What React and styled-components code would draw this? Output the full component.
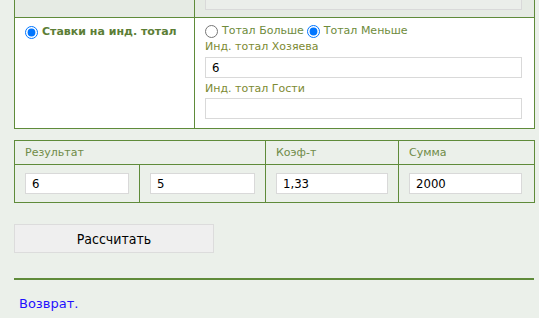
import React from 'react'
import styled, { createGlobalStyle } from 'styled-components'

const GlobalStyle = createGlobalStyle`
  html, body {
    margin: 0;
    background: #ebf0ea;
  }
  body {
    font-family: "DejaVu Sans", Verdana, sans-serif;
    font-size: 11px;
  }
`

const Page = styled.div`
  margin-top: -20px;
  padding: 0 4px 0 14px;
`

const Table = styled.table`
  width: 521px;
  border-collapse: collapse;
  table-layout: fixed;
  margin-bottom: ${(p) => p.$gap || 0}px;

  td, th {
    border: 1px solid #5f8b3a;
    vertical-align: top;
    text-align: left;
  }
`

const GreyRow = styled.tr`
  background: #e6ebe4;
  td {
    padding: 8px 12px 7px 10px;
  }
`

const WhiteRow = styled.tr`
  background: #fff;
`

const Cell = styled.td`
  padding: ${(p) => p.$pad || '6px 12px 9px 10px'};
  line-height: 14px;
`

const HeadCell = styled.th`
  box-sizing: border-box;
  padding: 5px 10px 4px 10px;
  font-weight: normal;
  color: #6f8b48;
  font-size: 11px;
  height: 24px;
  line-height: 14px;
`

const OptionRow = styled.div`
  display: flex;
  align-items: center;
  height: 14px;
  gap: 3px;
`

const Option = styled.label`
  display: inline-flex;
  align-items: center;
  gap: 4px;
  height: 14px;
  color: ${(p) => (p.$bold ? '#5c7e36' : '#6e8b3c')};
  font-weight: ${(p) => (p.$bold ? 'bold' : 'normal')};

  input {
    margin: 0;
    width: 13px;
    height: 13px;
  }
`

const Field = styled.div`
  color: #7d8a32;
  height: 14px;
  line-height: 14px;
  margin: ${(p) => (p.$first ? '2px 0 3px' : '4px 0 2px')};
`

const TextBox = styled.input`
  box-sizing: border-box;
  display: block;
  width: 100%;
  height: 21px;
  margin: 0;
  border: 1px solid #d9d9d9;
  background: ${(p) => (p.$muted ? '#ebeeea' : '#fff')};
  padding: 0 6px;
  font-family: "DejaVu Sans Condensed", "DejaVu Sans", sans-serif;
  font-stretch: condensed;
  font-size: 13px;
  color: #000;
  outline: none;
`

const Button = styled.button`
  display: block;
  width: 200px;
  height: 29px;
  background: #efefef;
  border: 1px solid #dcdcdc;
  font-family: "DejaVu Sans Condensed", "DejaVu Sans", sans-serif;
  font-stretch: condensed;
  font-size: 14px;
  color: #000;
  padding: 0;
`

const Rule = styled.div`
  width: 520px;
  height: 2px;
  background: #5f8b3a;
  margin: 25px 0 16px;
`

const BackLink = styled.a`
  display: inline-block;
  margin-left: 5px;
  color: #1f10ff;
  text-decoration: none;
  font-size: 13px;
`

export default function App() {
  return (
    <>
      <GlobalStyle />
      <Page>
        <Table $gap={11}>
          <colgroup>
            <col style={{ width: 180 }} />
            <col />
          </colgroup>
          <tbody>
            <GreyRow>
              <td />
              <td>
                <TextBox $muted readOnly />
              </td>
            </GreyRow>
            <WhiteRow>
              <Cell $pad="7px 8px 8px 10px">
                <Option $bold>
                  <input type="radio" name="kind" defaultChecked />
                  Ставки на инд. тотал
                </Option>
              </Cell>
              <Cell>
                <OptionRow>
                  <Option>
                    <input type="radio" name="side" />
                    Тотал Больше
                  </Option>
                  <Option>
                    <input type="radio" name="side" defaultChecked />
                    Тотал Меньше
                  </Option>
                </OptionRow>
                <Field $first>Инд. тотал Хозяева</Field>
                <TextBox defaultValue="6" />
                <Field>Инд. тотал Гости</Field>
                <TextBox defaultValue="" />
              </Cell>
            </WhiteRow>
          </tbody>
        </Table>

        <Table $gap={21}>
          <colgroup>
            <col style={{ width: 125 }} />
            <col style={{ width: 126 }} />
            <col style={{ width: 133 }} />
            <col />
          </colgroup>
          <thead>
            <tr>
              <HeadCell colSpan={2}>Результат</HeadCell>
              <HeadCell>Коэф-т</HeadCell>
              <HeadCell>Сумма</HeadCell>
            </tr>
          </thead>
          <tbody>
            <tr>
              <Cell $pad="8px 10px 8px 10px"><TextBox defaultValue="6" /></Cell>
              <Cell $pad="8px 10px 8px 10px"><TextBox defaultValue="5" /></Cell>
              <Cell $pad="8px 10px 8px 10px"><TextBox defaultValue="1,33" /></Cell>
              <Cell $pad="8px 12px 8px 10px"><TextBox defaultValue="2000" /></Cell>
            </tr>
          </tbody>
        </Table>

        <Button type="button">Рассчитать</Button>
        <Rule />
        <BackLink href="#">Возврат.</BackLink>
      </Page>
    </>
  )
}
